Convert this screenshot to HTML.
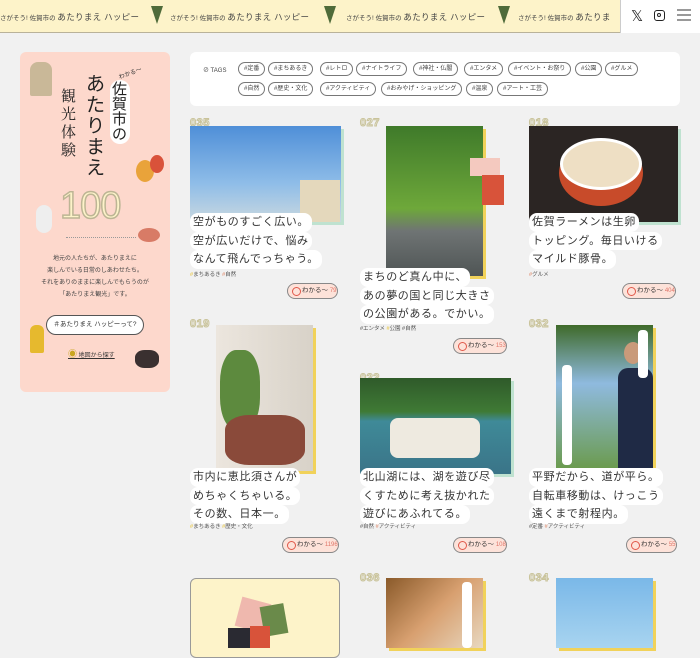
<!DOCTYPE html>
<html><head><meta charset="utf-8"><style>
*{margin:0;padding:0;box-sizing:border-box}
body{width:700px;height:648px;overflow:hidden;background:#f1f1f1;font-family:"Liberation Sans","Noto Sans CJK JP",sans-serif;color:#333;position:relative}
.a{position:absolute}
.top{left:0;top:0;width:700px;height:33px;background:#fdf3c9;border-bottom:1px solid #b9b29a}
.mq{top:11px;font-size:6.5px;color:#444;white-space:nowrap;letter-spacing:0}
.mq b{font-size:8.5px;font-weight:normal;letter-spacing:.3px}
.fan{top:6px;width:0;height:0;border-left:6px solid transparent;border-right:6px solid transparent;border-top:18px solid #4f6b3a}
.rt{left:620px;top:0;width:80px;height:33px;background:#fff;border-left:1px solid #ccc}
.side{left:20px;top:52px;width:150px;height:340px;background:#fdd8cc;border-radius:6px}
.tags{left:190px;top:52px;width:490px;height:54px;background:#fff;border-radius:6px}
.tg{position:absolute;height:14px;border:1px solid #777;border-radius:8px;font-size:6px;line-height:12px;padding:0 5px;white-space:nowrap;color:#444;background:#fff}
.num{font-size:11px;font-weight:bold;color:#f1f1f1;-webkit-text-stroke:1px #c9c39a;letter-spacing:.5px}
.txt{font-size:11px;letter-spacing:.6px;line-height:16.5px}
.txt span{background:#fff;border-radius:8px;padding:1px 3px;display:inline-block;margin-bottom:0}
.tgl{font-size:5.5px;color:#555;white-space:nowrap}
.btn{height:16px;border:1px solid #888;border-radius:9px;background:#fde2d9;font-size:6.5px;line-height:14px;padding-left:14px;color:#333;white-space:nowrap}
.btn:before{content:"";position:absolute;left:4px;top:3px;width:7px;height:7px;border:1px solid #e0584a;border-radius:50%}
.btn i{font-style:normal;color:#e0776a;font-size:6px}
</style></head><body>
<div class="a top"></div>
<div class="a mq" style="left:0">さがそう! 佐賀市の <b>あたりまえ ハッピー</b></div>
<div class="a fan" style="left:151px"></div>
<div class="a mq" style="left:170px">さがそう! 佐賀市の <b>あたりまえ ハッピー</b></div>
<div class="a fan" style="left:324px"></div>
<div class="a mq" style="left:346px">さがそう! 佐賀市の <b>あたりまえ ハッピー</b></div>
<div class="a fan" style="left:498px"></div>
<div class="a mq" style="left:518px">さがそう! 佐賀市の <b>あたりま</b></div>
<div class="a rt"></div>
<div class="a" style="left:631px;top:7px;font-size:15px;color:#222">𝕏</div>
<div class="a" style="left:654px;top:10px;width:11px;height:11px;border:1.5px solid #222;border-radius:3px"><div class="a" style="left:2px;top:2px;width:4px;height:4px;border:1.3px solid #222;border-radius:50%"></div></div>
<div class="a" style="left:677px;top:9px;width:14px;height:2px;background:#999;box-shadow:0 5px #999,0 10px #999"></div>

<div class="a side"></div>
<div class="a" style="left:30px;top:62px;width:22px;height:34px;background:#c9b898;border-radius:8px 8px 2px 2px"></div>
<div class="a" style="left:61px;top:88px;font-size:15px;line-height:18px;width:16px;color:#222;font-family:'Liberation Serif','Noto Serif CJK SC',serif">観光体験</div>
<div class="a" style="left:86px;top:74px;font-size:19px;line-height:21px;width:20px;color:#222">あたりまえ</div>
<div class="a" style="left:110px;top:80px;width:20px;height:64px;background:#fff;border-radius:10px"></div>
<div class="a" style="left:112px;top:82px;font-size:15px;line-height:15px;width:16px;color:#222">佐賀市の</div>
<div class="a" style="left:118px;top:68px;font-size:6px;transform:rotate(-20deg)">わかる〜</div>
<div class="a" style="left:136px;top:160px;width:18px;height:22px;background:#e9a33a;border-radius:50%"></div>
<div class="a" style="left:150px;top:155px;width:14px;height:18px;background:#d9523a;border-radius:50%"></div>
<div class="a" style="left:60px;top:185px;font-size:38px;color:#fdf3c9;-webkit-text-stroke:1.5px #bdb595;letter-spacing:-1px">100</div>
<div class="a" style="left:36px;top:205px;width:16px;height:28px;background:#eee;border-radius:8px"></div>
<div class="a" style="left:66px;top:237px;width:70px;border-top:1px dotted #999"></div>
<div class="a" style="left:138px;top:228px;width:22px;height:14px;background:#d87b66;border-radius:50%"></div>
<div class="a" style="left:30px;top:253px;width:130px;text-align:center;font-size:6px;line-height:12px;color:#444">地元の人たちが、あたりまえに<br>楽しんでいる日常のしあわせたち。<br>それをありのままに楽しんでもらうのが<br>「あたりまえ観光」です。</div>
<div class="a" style="left:46px;top:315px;width:98px;height:20px;background:#fff;border:1px solid #555;border-radius:10px;font-size:6.5px;line-height:18px;text-align:center">＃あたりまえ ハッピーって?</div>
<div class="a" style="left:30px;top:325px;width:14px;height:28px;background:#e6b92e;border-radius:6px 6px 2px 2px"></div>
<div class="a" style="left:68px;top:347px;font-size:6px;color:#333;text-decoration:underline"><span style="color:#caa620;font-size:9px">◉</span> 地図から探す</div>
<div class="a" style="left:135px;top:350px;width:24px;height:18px;background:#3a3030;border-radius:40%"></div>

<div class="a tags"></div>
<div class="a" style="left:203px;top:65px;font-size:6px;color:#444">⊘ TAGS</div>
<div class="tg" style="left:238px;top:62px">#定番</div>
<div class="tg" style="left:268px;top:62px">#まちあるき</div>
<div class="tg" style="left:320px;top:62px">#レトロ</div>
<div class="tg" style="left:356px;top:62px">#ナイトライフ</div>
<div class="tg" style="left:413px;top:62px">#神社・仏閣</div>
<div class="tg" style="left:464px;top:62px">#エンタメ</div>
<div class="tg" style="left:508px;top:62px">#イベント・お祭り</div>
<div class="tg" style="left:575px;top:62px">#公園</div>
<div class="tg" style="left:605px;top:62px">#グルメ</div>
<div class="tg" style="left:238px;top:82px">#自然</div>
<div class="tg" style="left:268px;top:82px">#歴史・文化</div>
<div class="tg" style="left:320px;top:82px">#アクティビティ</div>
<div class="tg" style="left:381px;top:82px">#おみやげ・ショッピング</div>
<div class="tg" style="left:466px;top:82px">#温泉</div>
<div class="tg" style="left:497px;top:82px">#アート・工芸</div>

<!-- card 1 -->
<div class="a num" style="left:190px;top:117px">035</div>
<div class="a" style="left:193px;top:129px;width:151px;height:96px;background:#bfe2d0"></div>
<div class="a" style="left:190px;top:126px;width:151px;height:96px;background:linear-gradient(#4f8fd8,#8fbde8 60%,#c9d8e0)"></div>
<div class="a" style="left:300px;top:180px;width:40px;height:42px;background:#e4d8bc"></div>
<div class="a txt" style="left:190px;top:213px"><span>空がものすごく広い。</span><br><span>空が広いだけで、悩み</span><br><span>なんて飛んでっちゃう。</span></div>
<div class="a tgl" style="left:190px;top:270px"><span style="color:#e9c53b">#</span>まちあるき <span style="color:#e08a6a">#</span>自然</div>
<div class="a btn" style="left:287px;top:283px">わかる〜 <i>79</i></div>

<!-- card 2 -->
<div class="a num" style="left:360px;top:117px">027</div>
<div class="a" style="left:389px;top:129px;width:97px;height:150px;background:#f1d25a"></div>
<div class="a" style="left:386px;top:126px;width:97px;height:150px;background:linear-gradient(#3f7a2a,#6ea83a 55%,#6f7474 70%,#4f5555)"></div>
<div class="a" style="left:470px;top:158px;width:30px;height:18px;background:#f4c9bf"></div>
<div class="a" style="left:482px;top:175px;width:22px;height:30px;background:#d8533a"></div>
<div class="a txt" style="left:360px;top:268px"><span>まちのど真ん中に、</span><br><span>あの夢の国と同じ大きさ</span><br><span>の公園がある。でかい。</span></div>
<div class="a tgl" style="left:360px;top:324px">#エンタメ <span style="color:#e9c53b">#</span>公園 #自然</div>
<div class="a btn" style="left:453px;top:338px">わかる〜 <i>153</i></div>

<!-- card 3 -->
<div class="a num" style="left:529px;top:117px">018</div>
<div class="a" style="left:532px;top:129px;width:149px;height:96px;background:#bfe2d0"></div>
<div class="a" style="left:529px;top:126px;width:149px;height:96px;background:#2b2523"></div>
<div class="a" style="left:559px;top:140px;width:84px;height:66px;background:#c84b2a;border-radius:50%"></div>
<div class="a" style="left:560px;top:138px;width:82px;height:52px;background:#eedfc4;border-radius:50%;border:3px solid #fff"></div>
<div class="a txt" style="left:529px;top:213px"><span>佐賀ラーメンは生卵</span><br><span>トッピング。毎日いける</span><br><span>マイルド豚骨。</span></div>
<div class="a tgl" style="left:529px;top:270px"><span style="color:#e08a6a">#</span>グルメ</div>
<div class="a btn" style="left:622px;top:283px">わかる〜 <i>404</i></div>

<!-- row2 -->
<div class="a num" style="left:190px;top:318px">019</div>
<div class="a" style="left:219px;top:328px;width:97px;height:146px;background:#f1d25a"></div>
<div class="a" style="left:216px;top:325px;width:97px;height:146px;background:linear-gradient(90deg,#ece6de,#d8d2c8)"></div>
<div class="a" style="left:220px;top:350px;width:40px;height:80px;background:#5d8a3e;border-radius:40%"></div>
<div class="a" style="left:225px;top:415px;width:80px;height:50px;background:#8a4a3a;border-radius:30%"></div>
<div class="a txt" style="left:190px;top:468px"><span>市内に恵比須さんが</span><br><span>めちゃくちゃいる。</span><br><span>その数、日本一。</span></div>
<div class="a tgl" style="left:190px;top:522px"><span style="color:#e9c53b">#</span>まちあるき <span style="color:#e9c53b">#</span>歴史・文化</div>
<div class="a btn" style="left:282px;top:537px">わかる〜 <i>1196</i></div>

<div class="a num" style="left:360px;top:372px">022</div>
<div class="a" style="left:363px;top:381px;width:151px;height:96px;background:#bfe2d0"></div>
<div class="a" style="left:360px;top:378px;width:151px;height:96px;background:linear-gradient(#2f5a2a,#3f7a35 35%,#3f8a98 45%,#3a7488)"></div>
<div class="a" style="left:390px;top:418px;width:90px;height:40px;background:#eeeae0;border-radius:8px"></div>
<div class="a txt" style="left:360px;top:468px"><span>北山湖には、湖を遊び尽</span><br><span>くすために考え抜かれた</span><br><span>遊びにあふれてる。</span></div>
<div class="a tgl" style="left:360px;top:522px">#自然 <span style="color:#e08a6a">#</span>アクティビティ</div>
<div class="a btn" style="left:453px;top:537px">わかる〜 <i>108</i></div>

<div class="a num" style="left:529px;top:318px">032</div>
<div class="a" style="left:559px;top:328px;width:97px;height:146px;background:#f1d25a"></div>
<div class="a" style="left:556px;top:325px;width:97px;height:146px;background:linear-gradient(#3f6a2a,#8fbadf 40%,#6a9a4a)"></div>
<div class="a" style="left:618px;top:368px;width:35px;height:103px;background:#1f2a45;border-radius:10px 10px 0 0"></div>
<div class="a" style="left:624px;top:342px;width:18px;height:22px;background:#c99a7a;border-radius:50%"></div>
<div class="a" style="left:638px;top:330px;width:10px;height:48px;background:#fff;border-radius:4px"></div>
<div class="a" style="left:562px;top:365px;width:10px;height:100px;background:#fff;border-radius:4px"></div>
<div class="a txt" style="left:529px;top:468px"><span>平野だから、道が平ら。</span><br><span>自転車移動は、けっこう</span><br><span>遠くまで射程内。</span></div>
<div class="a tgl" style="left:529px;top:522px">#定番 <span style="color:#e08a6a">#</span>アクティビティ</div>
<div class="a btn" style="left:626px;top:537px">わかる〜 <i>55</i></div>

<!-- row3 -->
<div class="a" style="left:190px;top:578px;width:150px;height:80px;background:#fdf3c9;border:1px solid #999;border-radius:6px"></div>
<div class="a" style="left:238px;top:600px;width:30px;height:30px;background:#efb8ae;transform:rotate(15deg)"></div>
<div class="a" style="left:262px;top:605px;width:24px;height:30px;background:#6a8a4a;transform:rotate(-10deg)"></div>
<div class="a" style="left:228px;top:628px;width:22px;height:20px;background:#2a2a32"></div>
<div class="a" style="left:250px;top:626px;width:20px;height:22px;background:#d8533a"></div>
<div class="a num" style="left:360px;top:572px">036</div>
<div class="a" style="left:389px;top:581px;width:97px;height:70px;background:#f1d25a"></div>
<div class="a" style="left:386px;top:578px;width:97px;height:70px;background:linear-gradient(135deg,#8a5a2a,#d8a070 50%,#e8d8c0)"></div>
<div class="a" style="left:462px;top:582px;width:10px;height:66px;background:#fff;border-radius:4px"></div>
<div class="a num" style="left:529px;top:572px">034</div>
<div class="a" style="left:559px;top:581px;width:97px;height:70px;background:#f1d25a"></div>
<div class="a" style="left:556px;top:578px;width:97px;height:70px;background:linear-gradient(#7ab8e8,#a8d4f0)"></div>
</body></html>
